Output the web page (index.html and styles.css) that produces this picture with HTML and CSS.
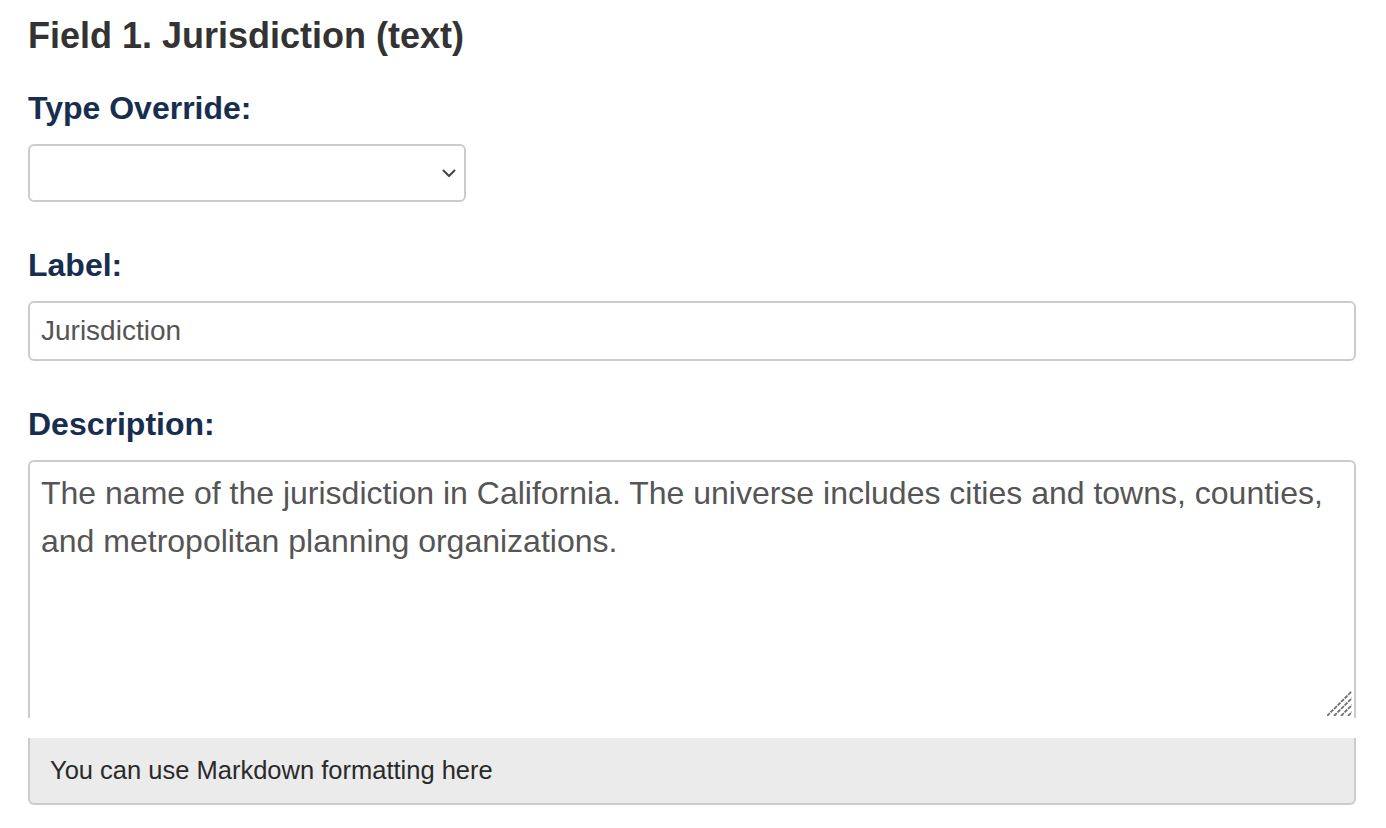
FILE: index.html
```html
<!DOCTYPE html>
<html>
<head>
<meta charset="utf-8">
<link rel="stylesheet" href="styles.css">
</head>
<body>
<div class="page">
  <h1 class="title">Field 1. Jurisdiction (text)</h1>

  <div class="field field-first">
    <label class="label" for="type">Type Override:</label>
    <div class="select-wrap">
      <select id="type" class="select"><option></option></select>
      <svg class="chevron" width="14" height="9" viewBox="0 0 14 9"><path d="M1.5 1.5 L7 7 L12.5 1.5" fill="none" stroke="#444" stroke-width="2" stroke-linecap="round" stroke-linejoin="round"/></svg>
    </div>
  </div>

  <div class="field">
    <label class="label" for="lbl">Label:</label>
    <input id="lbl" class="input" type="text" value="Jurisdiction">
  </div>

  <div class="field">
    <label class="label" for="desc">Description:</label>
    <div class="textarea-wrap">
      <textarea id="desc" class="textarea">The name of the jurisdiction in California. The universe includes cities and towns, counties, and metropolitan planning organizations.</textarea>
      <svg class="grip" width="25" height="25" viewBox="0 0 25 25"><g stroke="#707070" stroke-width="1.8" stroke-dasharray="4 1"><line x1="0" y1="25" x2="25" y2="0"/><line x1="7" y1="25" x2="25" y2="7"/><line x1="14" y1="25" x2="25" y2="14"/><line x1="21" y1="25" x2="25" y2="21"/></g></svg>
    </div>
    <div class="help">You can use Markdown formatting here</div>
  </div>
</div>
</body>
</html>
```

FILE: styles.css
```css
html, body {
  margin: 0;
  padding: 0;
  background: #ffffff;
}

body {
  font-family: "Liberation Sans", Arial, Helvetica, sans-serif;
}

.page {
  padding: 0 30px 0 28px;
}

.title {
  margin: 16px 0 0 0;
  font-size: 36px;
  line-height: 40px;
  font-weight: bold;
  color: #333333;
}

.field {
  margin-top: 45px;
}

.field-first {
  margin-top: 34px;
}

.label {
  display: block;
  font-size: 32px;
  line-height: 36px;
  font-weight: bold;
  color: #172e50;
  margin-bottom: 18px;
}

.select-wrap {
  position: relative;
  width: 438px;
  height: 58px;
}

.select {
  -webkit-appearance: none;
  appearance: none;
  box-sizing: border-box;
  width: 438px;
  height: 58px;
  margin: 0;
  border: 2px solid #cccccc;
  border-radius: 6px;
  background: #ffffff;
  font-family: inherit;
  font-size: 28px;
  color: #555555;
  outline: none;
}

.chevron {
  position: absolute;
  right: 10px;
  top: 25px;
}

.input {
  display: block;
  box-sizing: border-box;
  width: 100%;
  height: 60px;
  margin: 0;
  padding: 0 11px;
  border: 2px solid #cccccc;
  border-radius: 6px;
  font-family: inherit;
  font-size: 28px;
  color: #555555;
  background: #ffffff;
  outline: none;
}

.textarea-wrap {
  position: relative;
  height: 258px;
}

.textarea {
  display: block;
  box-sizing: border-box;
  width: 100%;
  height: 258px;
  margin: 0;
  padding: 7px 11px 0 11px;
  border: 2px solid #cccccc;
  border-bottom: none;
  border-radius: 6px 6px 0 0;
  font-family: inherit;
  font-size: 32px;
  line-height: 48px;
  color: #555555;
  background: #ffffff;
  resize: none;
  overflow: hidden;
  outline: none;
}

.grip {
  position: absolute;
  right: 4px;
  bottom: 2px;
}

.help {
  box-sizing: border-box;
  margin-top: 20px;
  height: 67px;
  padding: 0 20px;
  display: flex;
  align-items: center;
  background: #ebebeb;
  border: 2px solid #cccccc;
  border-top: none;
  border-radius: 0 0 6px 6px;
  font-size: 25.5px;
  color: #2a2a2a;
}
```
